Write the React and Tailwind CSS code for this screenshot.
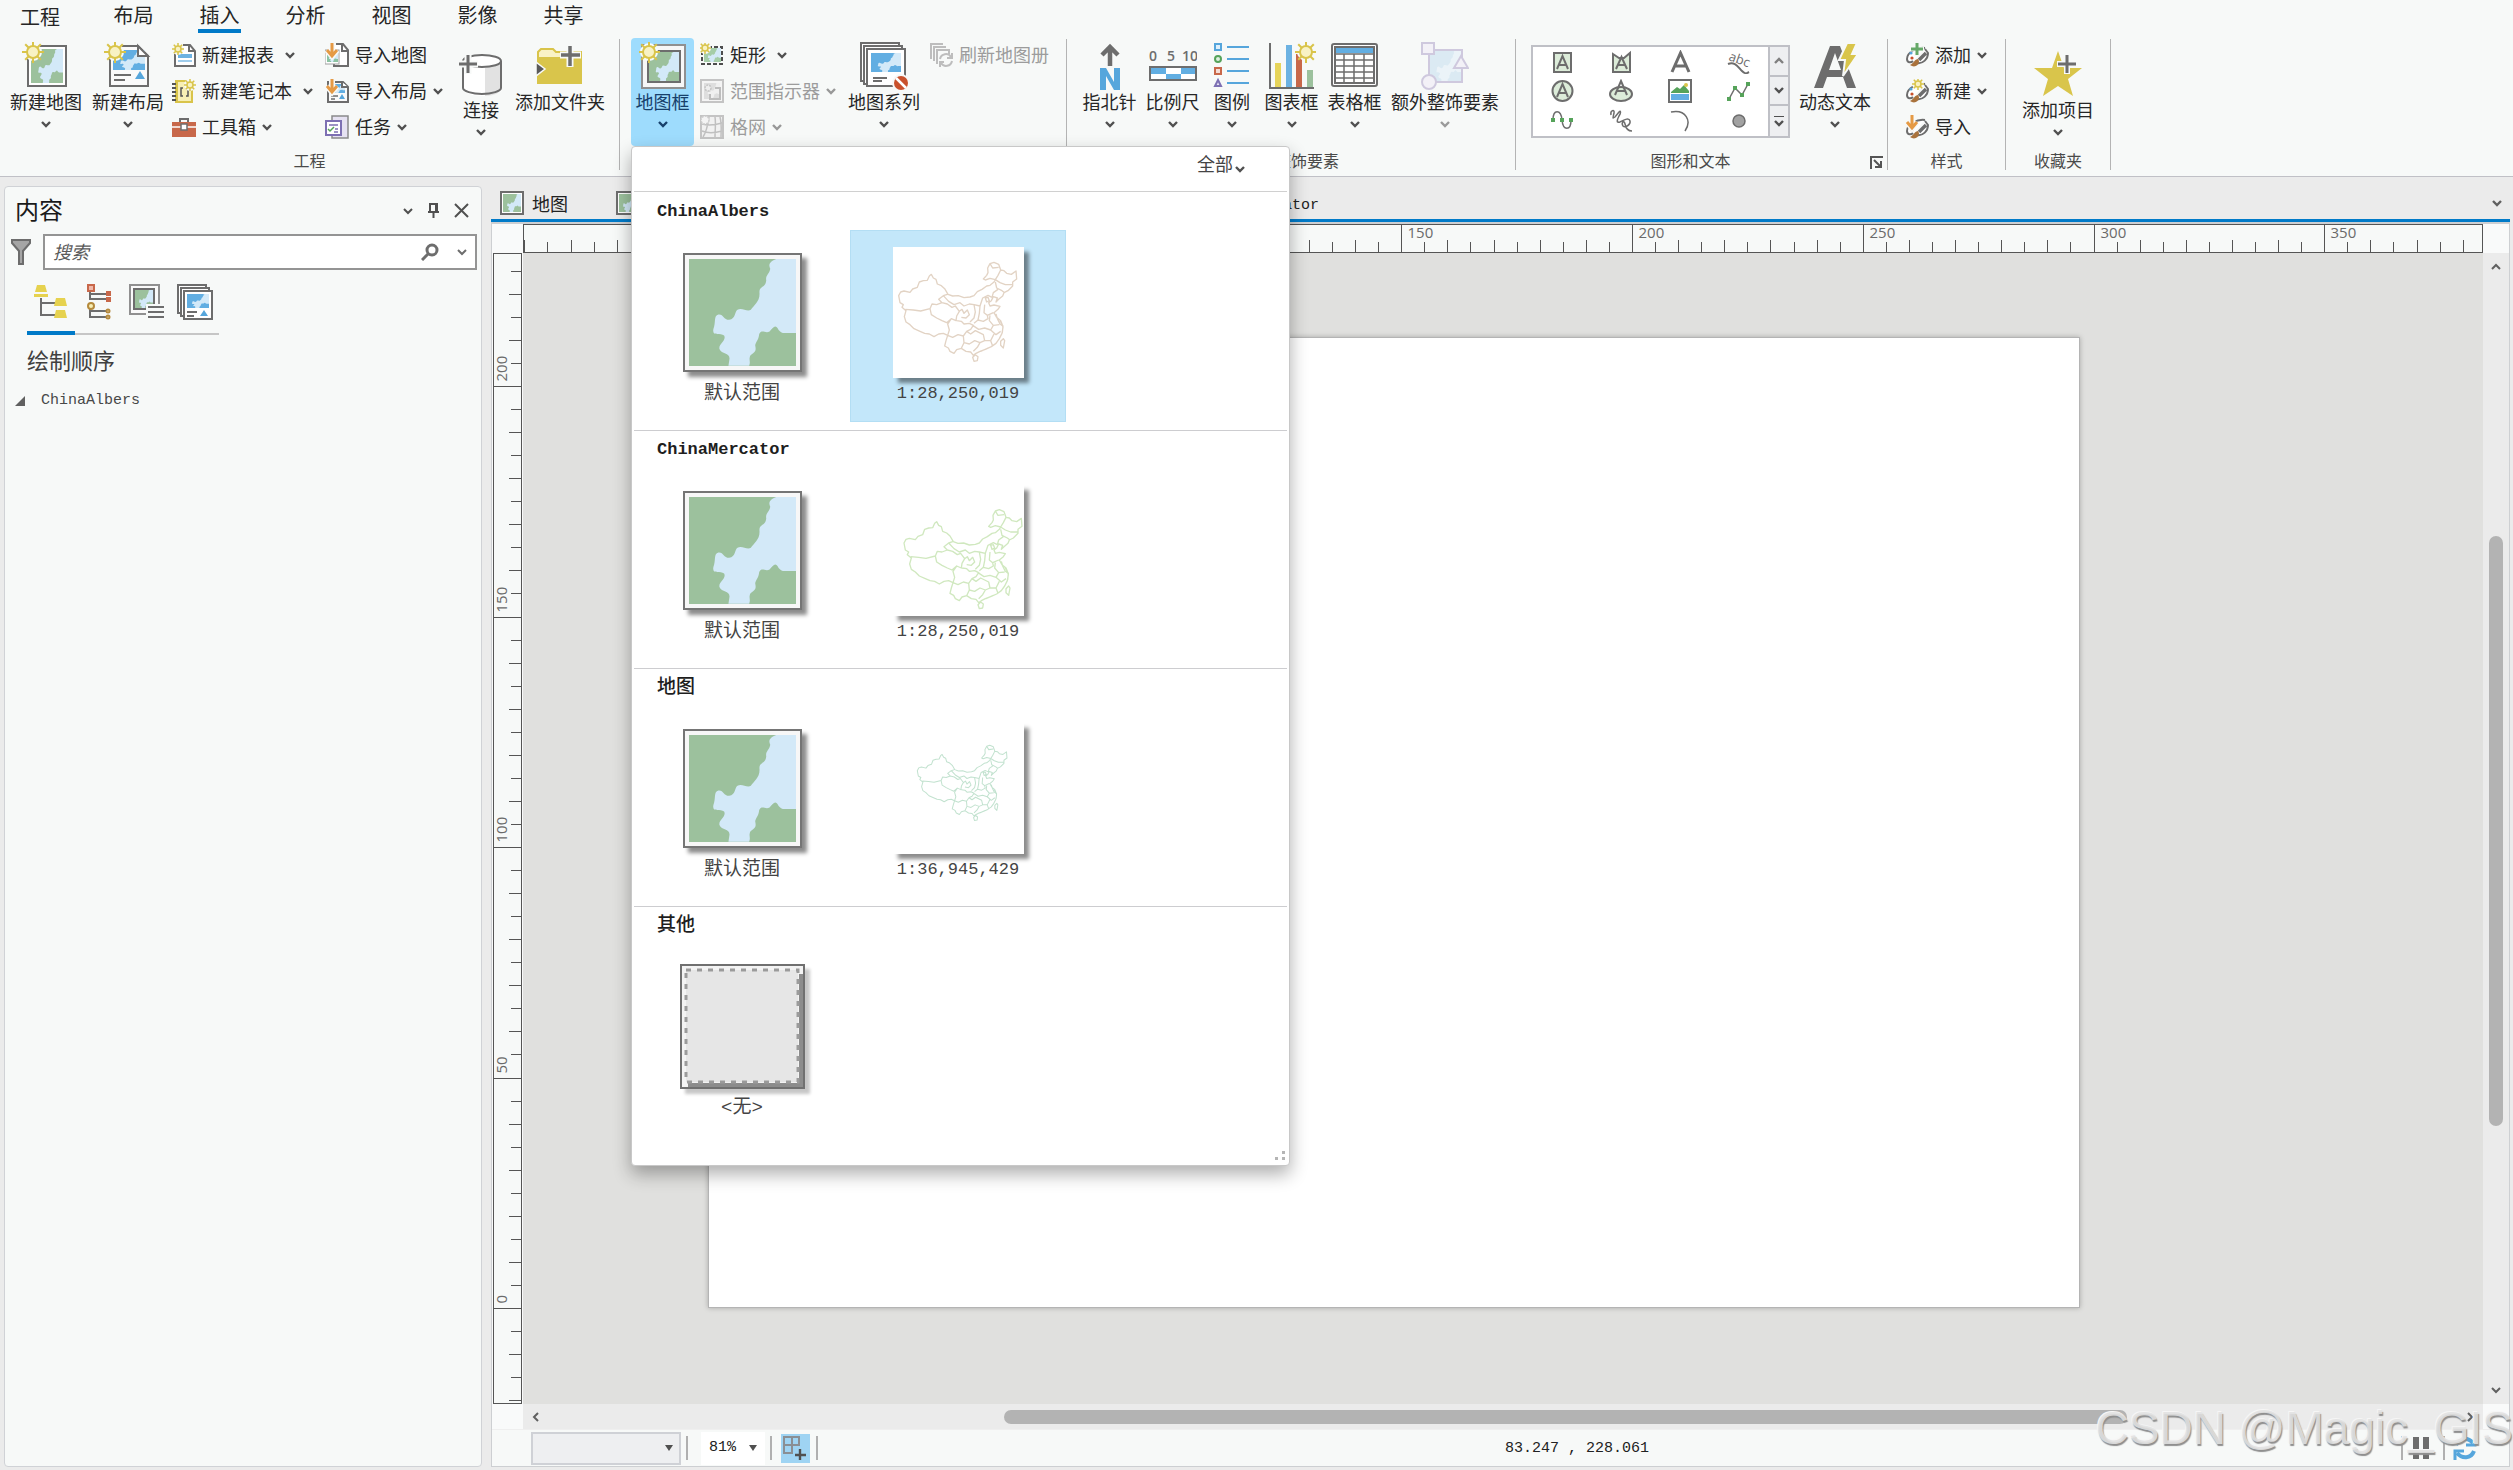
import React from "react";

const WATER =
  "M438,236 C415,245 415,255 420,265 C418,280 405,285 408,300 C405,325 385,315 388,340 C388,365 370,375 362,388 C350,395 335,380 322,388 C312,395 318,415 297,418 C280,418 280,400 265,402 C250,405 258,425 250,445 C245,470 270,455 282,465 C290,480 265,490 268,505 C275,522 300,515 298,535 L295,555 L357,555 C362,540 355,540 360,525 C370,515 380,515 375,495 C375,485 385,480 387,460 C395,445 405,460 418,453 C430,440 435,430 445,448 C455,460 460,457 470,457 L497,457 L497,236 Z";

function Terrain({ x = 0, y = 0, w, h, land = "#9cc19d", water = "#d3e9f8" }) {
  return (
    <svg x={x} y={y} width={w} height={h} viewBox="177 236 320 320" preserveAspectRatio="none">
      <rect x="177" y="236" width="320" height="320" fill={land} />
      <path d={WATER} fill={water} />
    </svg>
  );
}

function Sun({ x, y, r = 6, ray = 11, halo = "#f7f9f8", width = 2 }) {
  const rays = [0, 45, 90, 135, 180, 225, 270, 315];
  return (
    <g transform={`translate(${x} ${y})`}>
      <circle r={r + 3} fill={halo} />
      {rays.map((a) => (
        <line key={a} x1={r} y1="0" x2={ray} y2="0" stroke="#d9c44a" strokeWidth={width} transform={`rotate(${a})`} />
      ))}
      <circle r={r} fill="#f8f2c4" stroke="#d9c44a" strokeWidth={width} />
    </g>
  );
}

function Big({ children }) {
  return (
    <svg width="48" height="48" viewBox="0 0 48 48" fill="none" aria-hidden="true">
      {children}
    </svg>
  );
}

function Small({ children }) {
  return (
    <svg className="shrink-0" width="24" height="24" viewBox="0 0 24 24" fill="none" aria-hidden="true">
      {children}
    </svg>
  );
}

function Chevron({ up = false, thin = false, className = "" }) {
  return (
    <svg className={"shrink-0 " + className} width="10" height="8" viewBox="0 0 10 8" fill="none" stroke="currentColor" strokeWidth={thin ? 2 : 2.4} aria-hidden="true">
      <path d={up ? "M1 6L5 2L9 6" : "M1 2L5 6L9 2"} />
    </svg>
  );
}

const GREY = "#6d6d6d";

const NewMapIcon = () => (
  <Big>
    <rect x="6" y="4" width="38" height="40" fill="#fff" stroke={GREY} strokeWidth="2" />
    <Terrain x={9} y={7} w={32} h={34} />
    <Sun x={11} y={10} />
  </Big>
);

const NewLayoutIcon = () => (
  <Big>
    <path d="M6 4H34L44 14V44H6Z" fill="#fafafa" stroke={GREY} strokeWidth="2" />
    <Terrain x={9} y={8} w={32} h={20} land="#62aee2" />
    <path d="M34 4V14H44Z" fill="#fff" stroke={GREY} strokeWidth="2" />
    <path d="M10 33H27M10 38H21" stroke={GREY} strokeWidth="2" />
    <path d="M36 29L41 37H31Z" fill="#56a6dc" />
    <Sun x={11} y={10} />
  </Big>
);

const ReportIcon = () => (
  <Small>
    <path d="M3 6V23H23V8L18 2H11" fill="#fff" stroke={GREY} strokeWidth="2" />
    <path d="M17 2V8H23" stroke={GREY} strokeWidth="2" />
    <rect x="6" y="11" width="14" height="4" fill="#6cb2e2" />
    <path d="M6 18H20" stroke="#9fcdec" strokeWidth="2" />
    <Sun x={6} y={6} r={3} ray={6} width={1.5} />
  </Small>
);

const NotebookIcon = () => (
  <Small>
    <path d="M4 2H20V23H4Z" fill="#f7efb4" stroke="#d9c44a" strokeWidth="2" />
    <rect x="3" y="2" width="3" height="21" fill="#d9c44a" />
    <path d="M0 5H4M0 9H4M0 13H4M0 17H4M0 21H4" stroke="#555" strokeWidth="2" />
    <path d="M11 9H9V17H11M14 9H16V17H14" stroke="#555" strokeWidth="1.5" />
    <Sun x={18} y={6} r={3} ray={6} width={1.5} />
  </Small>
);

const ToolboxIcon = () => (
  <Small>
    <path d="M8 7V4H16V7" stroke={GREY} strokeWidth="2" />
    <rect x="0" y="7" width="24" height="15" fill="#c8684a" />
    <path d="M0 12H24" stroke="#fff" strokeWidth="1.5" />
    <rect x="9" y="9" width="6" height="6" fill="#fff" stroke={GREY} strokeWidth="1.5" />
  </Small>
);

const DownArrow = () => (
  <g>
    <path d="M7 0V12M2 7L7 13L12 7" stroke="#f7f9f8" strokeWidth="6" />
    <path d="M7 0V12M2 7L7 13L12 7" stroke="#e59a45" strokeWidth="3" />
  </g>
);

const ImportMapIcon = () => (
  <Small>
    <path d="M9 5V23H23V7L18 1H11" fill="#fff" stroke={GREY} strokeWidth="2" />
    <path d="M17 1V8H23" stroke={GREY} strokeWidth="2" />
    <rect x="0" y="7" width="14" height="14" fill="#fff" stroke="#a0a0a0" />
    <Terrain x={2} y={9} w={11} h={10} land="#8cc3a2" />
    <DownArrow />
  </Small>
);

const ImportLayoutIcon = () => (
  <Small>
    <path d="M3 3H18L23 8V23H3Z" fill="#fafafa" stroke={GREY} strokeWidth="2" />
    <Terrain x={5} y={5} w={15} h={9} land="#62aee2" />
    <path d="M17 3V8H23" fill="#fff" stroke={GREY} strokeWidth="2" />
    <path d="M6 17H13M6 20H10" stroke={GREY} strokeWidth="1.5" />
    <path d="M17 15L20 20H14Z" fill="#56a6dc" />
    <DownArrow />
  </Small>
);

const TaskIcon = () => (
  <Small>
    <path d="M7 1H23V23H7Z" fill="#e6e2f2" stroke="#8a8a8a" strokeWidth="1.5" />
    <rect x="1" y="6" width="15" height="14" fill="#fff" stroke="#7d70b3" strokeWidth="2" />
    <path d="M4 10H13M10 14H13M9 17H13" stroke="#7d70b3" strokeWidth="1.5" />
    <path d="M3 14L5 16L9 12" stroke="#56a35a" strokeWidth="1.5" />
  </Small>
);

const DatabaseIcon = () => (
  <Big>
    <path d="M7 11V39C7 43 15 46 25 46S45 43 45 39V11" fill="#fff" />
    <path d="M28 18V46C38 46 44 42 44 39V11Z" fill="#e2e2e2" />
    <ellipse cx="25" cy="11" rx="19" ry="6" fill="#fff" stroke={GREY} strokeWidth="2" />
    <path d="M6 11V38C6 41 15 44 25 44S44 41 44 38V11" stroke={GREY} strokeWidth="2" />
    <path d="M11 3V24M1 14H21" stroke="#f7f9f8" strokeWidth="7" />
    <path d="M11 5V23M2 14H20" stroke={GREY} strokeWidth="3" />
  </Big>
);

const FolderIcon = () => (
  <Big>
    <path d="M2 41V10L5 7H17L20 10H45V41Z" fill="#f9f2c6" stroke="#d9c44a" strokeWidth="2" />
    <path d="M1 15H46V42H1Z" fill="#d9c54b" />
    <path d="M0 20L9 27L0 34Z" fill="#5a5a5a" stroke="#f7f9f8" strokeWidth="1.5" />
    <path d="M34 3V25M24 13H45" stroke="#f7f9f8" strokeWidth="7" />
    <path d="M34 4V24M25 13H44" stroke={GREY} strokeWidth="3.5" />
  </Big>
);

const MapFrameIcon = () => (
  <Big>
    <rect x="3" y="3" width="43" height="43" fill="#f7f7f7" stroke="#909090" strokeWidth="2" />
    <rect x="9" y="9" width="32" height="31" fill="#fff" stroke={GREY} strokeWidth="2" />
    <Terrain x={10} y={10} w={30} h={29} />
    <Sun x={10} y={10} halo="#f4fbff" />
  </Big>
);

const RectIcon = () => (
  <Small>
    <Terrain x={4} y={5} w={17} h={14} land="#a5cda8" />
    <rect x="2" y="4" width="20" height="17" stroke="#4d4d4d" strokeWidth="2" strokeDasharray="4 2" />
    <Sun x={5} y={5} r={3} ray={6} width={1.5} />
  </Small>
);

const ExtentIcon = () => (
  <Small>
    <rect x="1" y="1" width="22" height="22" fill="#f4f4f4" stroke="#c4c4c4" strokeWidth="2" />
    <Terrain x={4} y={4} w={16} h={16} land="#dedede" water="#f0f0f0" />
    <path d="M15 9H20V20H10V15" stroke="#bdbdbd" strokeWidth="2" />
    <circle cx="8" cy="9" r="3" fill="#eee" stroke="#c4c4c4" strokeWidth="1.5" strokeDasharray="2 1" />
  </Small>
);

const GridIcon = () => (
  <Small>
    <rect x="1" y="1" width="22" height="22" fill="#f1f1f1" stroke="#c4c4c4" strokeWidth="2" />
    <path d="M9 2C8 9 7 16 3 22M15 2C16 9 15 16 15 22M20 2C22 9 21 16 21 22M2 9C9 11 15 10 22 8M2 16C9 19 15 18 22 16" stroke="#c0c0c0" strokeWidth="1.5" />
    <circle cx="5" cy="5" r="4" fill="#f4f4f4" stroke="#ccc" strokeWidth="1.5" strokeDasharray="2 1" />
  </Small>
);

const MapSeriesIcon = () => (
  <Big>
    <rect x="1" y="1" width="38" height="38" fill="#fff" stroke={GREY} strokeWidth="2" />
    <rect x="4" y="4" width="38" height="38" fill="#fff" stroke={GREY} strokeWidth="2" />
    <rect x="7" y="7" width="38" height="37" fill="#fff" stroke={GREY} strokeWidth="2" />
    <Terrain x={11} y={11} w={30} h={19} land="#62aee2" />
    <path d="M13 36H27M13 39H22" stroke={GREY} strokeWidth="2" />
    <circle cx="41" cy="41" r="9" fill="#f7f9f8" />
    <circle cx="41" cy="41" r="7" fill="#c9512c" />
    <path d="M36 36L46 46" stroke="#fff" strokeWidth="2.5" />
  </Big>
);

const RefreshBookIcon = () => (
  <Small>
    <path d="M2 16V1H14M5 18V4H17M8 21V7H20V11" stroke="#bdbdbd" strokeWidth="2" />
    <path d="M11 16A6 6 0 0 1 22 14M23 18A6 6 0 0 1 12 20M23 10V15H18M11 24V19H15" stroke="#bdbdbd" strokeWidth="2" />
  </Small>
);

const NorthIcon = () => (
  <Big>
    <path d="M24 4V24M16 13L24 5L32 13" stroke={GREY} strokeWidth="4.5" />
    <path d="M14 48V26H20L28 40V26H34V48H28L20 34V48Z" fill="#56a6dc" />
  </Big>
);

const ScaleIcon = () => (
  <Big>
    <g fill="#6d6d6d" fontFamily="Open Sans" fontSize="14" textAnchor="middle" fontWeight="600">
      <text x="4" y="19">0</text>
      <text x="22" y="19">5</text>
      <text x="41" y="19">10</text>
    </g>
    <rect x="1" y="25" width="46" height="13" fill="#fff" stroke={GREY} strokeWidth="2" />
    <path d="M2 26H17V32H2ZM32 26H46V32H32ZM17 32H32V37H17Z" fill="#62aee2" />
  </Big>
);

const LegendIcon = () => (
  <Big>
    <path d="M19 5H41M19 17H41M19 29H41M19 41H41" stroke="#56a6dc" strokeWidth="2" />
    <rect x="7" y="2" width="6" height="6" fill="#dff0fb" stroke="#56a6dc" strokeWidth="2" />
    <circle cx="10" cy="17" r="3" fill="#dff0df" stroke="#56a35a" strokeWidth="2" />
    <rect x="7" y="26" width="6" height="6" fill="#f5ddd5" stroke="#c8684a" strokeWidth="2" />
    <path d="M10 38L13 44H7Z" fill="#e6e2f2" stroke="#7d70b3" strokeWidth="2" />
  </Big>
);

const ChartIcon = () => (
  <Big>
    <rect x="7" y="21" width="6" height="24" fill="#e6d45a" />
    <rect x="18" y="3" width="6" height="42" fill="#6cb2e2" />
    <rect x="28" y="12" width="6" height="33" fill="#c8684a" />
    <rect x="39" y="28" width="6" height="17" fill="#9cc19d" />
    <path d="M2 1V46H46" stroke={GREY} strokeWidth="2" />
    <Sun x={38} y={10} />
  </Big>
);

const TableIcon = () => (
  <Big>
    <rect x="1" y="2" width="45" height="42" rx="2" fill="#fff" stroke={GREY} strokeWidth="2" />
    <rect x="4" y="5" width="39" height="36" fill="#fff" stroke={GREY} strokeWidth="2" />
    <rect x="5" y="6" width="37" height="5" fill="#62aee2" />
    <path d="M4 12H43M4 18H43M4 24H43M4 30H43M4 36H43M13 12V41M23 12V41M33 12V41" stroke={GREY} strokeWidth="1.5" />
  </Big>
);

const ExtraIcon = () => (
  <Big>
    <Terrain x={8} y={8} w={33} h={32} land="#dbeaf3" water="#ebf3f8" />
    <path d="M8 8H41V40H8Z" stroke="#cfc9de" strokeWidth="2" />
    <rect x="1" y="1" width="12" height="11" fill="#f3f1f7" stroke="#cfc9de" strokeWidth="2" />
    <circle cx="8" cy="40" r="7" fill="#f3f1f7" stroke="#cfc9de" strokeWidth="2" />
    <path d="M40 14L47 26H33Z" fill="#f3f1f7" stroke="#cfc9de" strokeWidth="2" />
  </Big>
);

const DynamicTextIcon = () => (
  <Big>
    <path d="M3 46L19 4H29L45 46H36L32 35H16L12 46ZM18 28H30L24 11Z" fill={GREY} fillRule="evenodd" />
    <path d="M36 1H46L41 12H47L32 34L34 18H28Z" fill="#d9c54b" stroke="#f7f9f8" strokeWidth="2" />
  </Big>
);

function PaletteIcon({ children }) {
  return (
    <Small>
      <path d="M20 5C12 4 2 9 2 16C2 20 6 20 8 18" stroke={GREY} strokeWidth="2" fill="#fff" />
      <path d="M12 20C18 21 23 16 23 10L20 6" stroke={GREY} strokeWidth="2" fill="#fff" />
      <circle cx="7" cy="15" r="1.6" fill="#c8512c" />
      <circle cx="6" cy="10" r="1.6" fill="#56a6dc" />
      <path d="M21 10L14 17" stroke={GREY} strokeWidth="3.5" />
      <path d="M13 16C10 16 9 20 5 22C9 25 14 23 14 18Z" fill="#a9723c" />
      {children}
    </Small>
  );
}

const StarIcon = () => (
  <Big>
    <path d="M24 1L30 18H48L34 29L39 46L24 36L9 46L14 29L0 18H18Z" fill="#d9c54b" />
    <path d="M33 4V24M23 14H43" stroke="#f7f9f8" strokeWidth="6" />
    <path d="M33 5V23M24 14H42" stroke={GREY} strokeWidth="3" />
  </Big>
);

function BigButton({ icon, label, width, low = false, chevron = true, active = false, dim = false }) {
  return (
    <button
      type="button"
      className={
        "mt-px flex h-[108px] flex-col items-center text-[18px] leading-[23px] whitespace-nowrap " +
        width +
        (low ? " pt-3" : " pt-1") +
        (active ? " rounded-[4px] bg-[#9edcfd] text-[#17406b]" : " text-[#262626]")
      }
    >
      {icon}
      <span>{label}</span>
      {chevron && (
        <span className={"flex h-[22px] items-center " + (dim ? "text-[#9a9a9a]" : active ? "text-[#17406b]" : "text-[#505050]")}>
          <Chevron />
        </span>
      )}
    </button>
  );
}

function RowButton({ icon, label, chevron = null, disabled = false }) {
  return (
    <button
      type="button"
      disabled={disabled}
      className={"flex h-9 items-center px-[3px] text-[18px] leading-6 whitespace-nowrap " + (disabled ? "text-[#9c9c9c]" : "text-[#262626]")}
    >
      {icon}
      <span className="ml-1.5 pb-0.5">{label}</span>
      {chevron && <Chevron className={chevron + (disabled ? " text-[#989898]" : " text-[#505050]")} />}
    </button>
  );
}

function Group({ label, className = "", launcher = false, children }) {
  return (
    <section className="flex">
      <div className="flex flex-col">
        <div className={"flex h-[109px] items-start " + className}>{children}</div>
        <div className="flex h-[30px] items-center pb-0.5 text-[16px] text-[#4a4a4a]">
          <span className="flex-1 text-center">{label}</span>
          {launcher && (
            <button type="button" aria-label="更多选项" className="flex w-[22px] justify-center pt-1">
              <svg width="13" height="13" viewBox="0 0 13 13" fill="none" stroke="#555" strokeWidth="2">
                <path d="M1 13V1H13M4 4L11 11M11 5V11H5" />
              </svg>
            </button>
          )}
        </div>
      </div>
      <div className="mt-0.5 h-[131px] w-px bg-[#b4b4b4]" />
    </section>
  );
}

const GALLERY = [
  ["矩形文本", <><rect x="4" y="3" width="17" height="19" fill="#dcecd9" stroke={GREY} strokeWidth="2" /><path d="M7 19L12.5 6L18 19M9 15H16" stroke={GREY} strokeWidth="2" /></>],
  ["面文本", <><path d="M4 22V4L10 8H15L21 3V22Z" fill="#dcecd9" stroke={GREY} strokeWidth="2" /><path d="M7 19L12.5 7L18 19M9 15H16" stroke={GREY} strokeWidth="2" /></>],
  ["直线文本", <path d="M4 22L12.5 3L21 22M7 16H18" stroke={GREY} strokeWidth="3" />],
  ["曲线文本", <><text x="1" y="10" fontSize="13" fontFamily="Open Sans" fill={GREY} transform="rotate(20 1 10)">abc</text><path d="M1 14C8 11 11 17 15 21S20 23 22 22" stroke={GREY} strokeWidth="2" /></>],
  ["圆形文本", <><circle cx="12.5" cy="12" r="10" fill="#dcecd9" stroke={GREY} strokeWidth="2" /><path d="M7 18L12.5 5L18 18M9 14H16" stroke={GREY} strokeWidth="2" /></>],
  ["椭圆文本", <><ellipse cx="12" cy="15" rx="11" ry="7" fill="#dcecd9" stroke={GREY} strokeWidth="2" /><path d="M6 16L12 2L18 16M8 12H16" stroke={GREY} strokeWidth="2" /></>],
  ["图片", <><rect x="1" y="1" width="22" height="22" fill="#fff" stroke={GREY} strokeWidth="2" /><path d="M3 13L9 8L12 10L16 6L21 12V14H3Z" fill="#56a35a" /><circle cx="18" cy="6" r="2" fill="#d9c44a" /><path d="M3 15H21V21H3Z" fill="#62aee2" /></>],
  ["折线", <><path d="M2 20L8 9L15 16L21 5" stroke={GREY} strokeWidth="1.5" /><path d="M0 18H4V22H0ZM6 7H10V11H6ZM13 14H17V18H13ZM19 3H23V7H19Z" fill="#56a35a" /></>],
  ["曲线", <><path d="M3 11C3 0 11 0 12 11S21 22 21 11" stroke={GREY} strokeWidth="1.5" /><path d="M1 9H5V13H1ZM10 9H14V13H10ZM19 9H23V13H19Z" fill="#56a35a" /></>],
  ["手绘线", <path d="M2 6C1 1 6 0 5 4C4 9 3 10 6 8L10 3C12 1 12 4 10 7C8 11 7 14 11 13C15 11 20 8 21 12C22 16 16 19 14 17C12 14 15 10 16 15C17 20 19 22 23 22" stroke={GREY} strokeWidth="1.5" />],
  ["弧", <path d="M3 3C18 0 24 12 17 22" stroke={GREY} strokeWidth="1.5" />],
  ["椭圆", <circle cx="12" cy="12" r="6" fill="#a2a2a2" stroke={GREY} strokeWidth="1.5" />],
];

const CHINA =
  "M806,345 L812,334 L822,331 L840,335 L848,325 L862,320 L868,304 L880,300 L892,299 L898,286 L904,281 L910,292 L918,296 L922,310 L934,315 L944,324 L954,341 L968,346 L985,345 L1002,351 L1020,349 L1032,345 L1042,333 L1056,326 L1070,316 L1080,314 L1092,304 L1096,297 L1080,293 L1066,298 L1060,295 L1070,284 L1074,276 L1073,262 L1080,249 L1092,245 L1106,251 L1112,268 L1122,270 L1130,278 L1144,281 L1158,271 L1160,295 L1148,304 L1148,316 L1134,330 L1122,336 L1118,346 L1106,356 L1098,364 L1102,352 L1090,348 L1084,360 L1076,366 L1080,376 L1092,373 L1110,377 L1104,386 L1092,396 L1100,410 L1112,420 L1116,430 L1119,440 L1116,458 L1108,474 L1098,488 L1084,498 L1066,506 L1050,512 L1038,518 L1030,524 L1022,514 L1008,512 L994,503 L980,507 L972,518 L960,512 L955,502 L944,496 L948,480 L953,464 L940,458 L926,460 L912,468 L898,460 L884,458 L870,452 L852,444 L840,432 L828,424 L823,408 L828,390 L816,380 L820,372 L810,366 Z M826,386 L850,388 L872,391 L900,384 M900,384 L906,370 L920,372 L936,366 L926,356 L940,345 L952,341 M936,366 L952,370 L966,380 L976,376 L988,392 L980,406 L978,420 L964,414 L950,426 L936,420 L920,412 L904,402 L900,384 M940,345 L956,362 L972,372 L990,366 L1002,376 L1018,370 L1032,372 L1050,376 L1058,352 L1074,344 L1086,350 M988,392 L996,386 L1002,398 L1012,388 L1018,402 L1008,412 L994,410 M964,414 L953,430 L958,448 L953,464 L968,470 L984,462 L1000,466 L1010,452 L1022,446 L1030,434 L1018,428 L1002,430 L994,422 L980,420 M1032,372 L1036,394 L1032,412 L1020,424 M1050,376 L1048,398 L1044,418 L1032,428 M1064,372 L1062,396 L1072,404 L1090,396 M1044,418 L1060,422 L1074,414 L1072,404 M1028,434 L1046,446 L1064,442 L1082,448 L1090,434 L1078,420 L1080,404 M1090,434 L1108,432 M1082,448 L1098,462 L1112,452 M1000,466 L1002,486 L1018,490 L1034,480 L1050,486 L1064,480 L1060,462 L1036,450 L1022,460 L1010,452 M1064,480 L1082,480 L1092,460 M1082,480 L1088,496 M1050,486 L1042,500 L1030,512 M1002,486 L994,503 M1112,268 L1104,284 L1096,297 L1110,306 L1126,312 L1148,312 M1096,304 L1100,322 L1116,330 L1124,336 M1086,350 L1090,336 L1104,326 M1080,249 L1088,262 L1106,260 M1066,352 L1074,350 L1078,360 L1070,364 Z M1098,400 L1102,414 L1110,430 L1118,436 M1028,530 L1036,522 L1044,528 L1042,540 L1032,542 Z M1112,482 L1120,474 L1124,480 L1120,502 L1112,494 Z M1110,420 L1119,436 L1117,456 M1052,512 L1074,502";

function ChinaThumb({ stroke, transform }) {
  return (
    <svg className="bg-white shadow-[5px_5px_4px_rgba(0,0,0,0.45)]" width="131" height="131" viewBox="0 0 393 393" aria-hidden="true">
      <g transform={transform}>
        <path d={CHINA} transform="translate(-789 -199)" fill="none" stroke={stroke} strokeWidth="4" strokeLinejoin="round" />
      </g>
    </svg>
  );
}

function DefaultThumb() {
  return (
    <svg className="shadow-[5px_5px_4px_rgba(0,0,0,0.45)]" width="119" height="119" viewBox="0 0 119 119" aria-hidden="true">
      <rect x="1" y="1" width="117" height="117" fill="#f7f7f7" stroke="#757575" strokeWidth="2" />
      <Terrain x={6} y={6} w={107} h={107} />
    </svg>
  );
}

function NoneThumb() {
  return (
    <svg className="shadow-[5px_5px_3px_rgba(0,0,0,0.22)]" width="125" height="125" viewBox="0 0 125 125" aria-hidden="true">
      <rect x="1" y="1" width="123" height="123" fill="#f3f3f3" stroke="#707070" strokeWidth="2" />
      <path d="M121 10V121H8" fill="none" stroke="#8c8c8c" strokeWidth="4" />
      <rect x="6" y="6" width="112" height="112" fill="#e6e6e6" stroke="#9b9b9b" strokeWidth="3" strokeDasharray="5 6" />
    </svg>
  );
}

function FrameOption({ thumb, label, latin = false, selected = false }) {
  return (
    <button
      type="button"
      className={
        "flex h-48 w-[216px] flex-col items-center border pt-4 leading-8 text-[#444] " +
        (latin ? "text-[17px] " : "text-[19px] ") +
        (selected ? "border-[#b3def4] bg-[#c3e7fa]" : "border-transparent")
      }
    >
      <span className="flex h-[131px] items-center">{thumb}</span>
      <span>{label}</span>
    </button>
  );
}

function FrameSection({ title, latin = false, last = false, children }) {
  return (
    <section className={"pb-2 " + (last ? "" : "border-b border-[#cdcdd0]")}>
      <h3 className={"h-[37px] pl-[23px] leading-[38px] text-[#1e1e1e] " + (latin ? "text-[17px] font-bold" : "text-[19px] font-medium")}>{title}</h3>
      <div className="flex">{children}</div>
    </section>
  );
}

function FramePopup() {
  return (
    <div className="absolute top-[109px] left-0 z-20 h-[1020px] w-[659px] rounded-[4px] border border-[#c8c8c8] bg-white px-0.5 font-[Liberation_Mono,Noto_Sans_CJK_SC,monospace] shadow-[0_8px_18px_rgba(0,0,0,0.32)]">
      <div className="mb-px flex h-[45px] items-center justify-end border-b border-[#d0d0d0] pr-[42px] pb-1.5">
        <button type="button" className="flex items-center gap-0.5 text-[18px] text-[#444]">
          全部
          <Chevron className="mt-1.5 text-[#505050]" />
        </button>
      </div>
      <FrameSection latin title="ChinaAlbers">
        <FrameOption thumb={<DefaultThumb />} label="默认范围" />
        <FrameOption selected latin thumb={<ChinaThumb stroke="#e2d3c4" />} label="1:28,250,019" />
      </FrameSection>
      <FrameSection latin title="ChinaMercator">
        <FrameOption thumb={<DefaultThumb />} label="默认范围" />
        <FrameOption latin thumb={<ChinaThumb stroke="#d0e8bf" transform="translate(16 28)" />} label="1:28,250,019" />
      </FrameSection>
      <FrameSection title="地图">
        <FrameOption thumb={<DefaultThumb />} label="默认范围" />
        <FrameOption latin thumb={<ChinaThumb stroke="#c2e2cf" transform="translate(60 32) scale(0.76)" />} label="1:36,945,429" />
      </FrameSection>
      <FrameSection title="其他" last>
        <FrameOption thumb={<NoneThumb />} label="<无>" />
      </FrameSection>
      <svg className="absolute right-1 bottom-1" width="10" height="10" viewBox="0 0 10 10" fill="#b5b5b5" aria-hidden="true">
        <path d="M7 0H10V3H7ZM7 6H10V9H7ZM0 6H3V9H0Z" />
      </svg>
    </div>
  );
}

function Ribbon() {
  const tabs = ["布局", "插入", "分析", "视图", "影像", "共享"];
  return (
    <header className="border-b border-[#c0c0c6] bg-[#f7f9f8]">
      <nav className="flex h-[37px] pl-[18px] text-[20px] leading-[28px] text-[#262626]">
        <button type="button" className="mr-[50px] h-[33px] w-11">工程</button>
        {tabs.map((t) => (
          <button key={t} type="button" className={"mr-[43px] h-[33px] w-[43px] border-b-4 " + (t === "插入" ? "border-[#007ac8]" : "border-transparent")}>
            {t}
          </button>
        ))}
      </nav>
      <div className="flex">
        <Group label="工程" className="pr-[11px] pl-[5px]">
          <BigButton icon={<NewMapIcon />} label="新建地图" width="w-[82px]" />
          <BigButton icon={<NewLayoutIcon />} label="新建布局" width="w-[82px]" />
          <div className="flex w-[153px] flex-col items-start">
            <RowButton icon={<ReportIcon />} label="新建报表" chevron="ml-[11px]" />
            <RowButton icon={<NotebookIcon />} label="新建笔记本" chevron="ml-[11px]" />
            <RowButton icon={<ToolboxIcon />} label="工具箱" chevron="ml-1.5" />
          </div>
          <div className="flex w-32 flex-col items-start">
            <RowButton icon={<ImportMapIcon />} label="导入地图" />
            <RowButton icon={<ImportLayoutIcon />} label="导入布局" chevron="ml-1.5" />
            <RowButton icon={<TaskIcon />} label="任务" chevron="ml-1.5" />
          </div>
          <BigButton icon={<DatabaseIcon />} label="连接" width="w-[62px]" low />
          <BigButton icon={<FolderIcon />} label="添加文件夹" width="w-24" chevron={false} />
        </Group>
        <Group label="地图框" className="pr-[14px] pl-[11px]">
          <div className="relative">
            <BigButton icon={<MapFrameIcon />} label="地图框" width="w-[63px]" active />
            <FramePopup />
          </div>
          <div className="ml-[3px] flex w-[145px] flex-col items-start">
            <RowButton icon={<RectIcon />} label="矩形" chevron="ml-[11px]" />
            <RowButton icon={<ExtentIcon />} label="范围指示器" chevron="ml-1.5" disabled />
            <RowButton icon={<GridIcon />} label="格网" chevron="ml-1.5" disabled />
          </div>
          <BigButton icon={<MapSeriesIcon />} label="地图系列" width="w-[84px]" />
          <RowButton icon={<RefreshBookIcon />} label="刷新地图册" disabled />
        </Group>
        <Group label="地图整饰要素" className="px-[11px]">
          <BigButton icon={<NorthIcon />} label="指北针" width="w-[63px]" />
          <BigButton icon={<ScaleIcon />} label="比例尺" width="w-[63px]" />
          <BigButton icon={<LegendIcon />} label="图例" width="w-14" />
          <BigButton icon={<ChartIcon />} label="图表框" width="w-[63px]" />
          <BigButton icon={<TableIcon />} label="表格框" width="w-[63px]" />
          <BigButton icon={<ExtraIcon />} label="额外整饰要素" width="w-[118px]" dim />
        </Group>
        <Group label="图形和文本" className="pr-[11px] pl-[15px]" launcher>
          <div className="mt-2 flex h-[93px] w-[259px] border-2 border-[#bfc0c6] bg-white">
            <div className="grid flex-1 grid-cols-4 grid-rows-3">
              {GALLERY.map(([name, art]) => (
                <button key={name} type="button" aria-label={name} className="flex items-center justify-center">
                  <Small>{art}</Small>
                </button>
              ))}
            </div>
            <div className="grid w-5 grid-rows-3 divide-y-2 divide-[#bfc0c6] border-l-2 border-[#bfc0c6] bg-[#eeeff1] text-[#505050]">
              <button type="button" aria-label="上一行" className="flex items-center justify-center text-[#808080]"><Chevron up /></button>
              <button type="button" aria-label="下一行" className="flex items-center justify-center"><Chevron /></button>
              <button type="button" aria-label="展开" className="flex flex-col items-center justify-center gap-0.5">
                <span className="h-px w-2.5 bg-[#505050]" />
                <Chevron />
              </button>
            </div>
          </div>
          <BigButton icon={<DynamicTextIcon />} label="动态文本" width="ml-[4px] w-[82px]" />
        </Group>
        <Group label="样式" className="w-[117px] pl-[14px]">
          <div className="flex flex-col items-start">
            <RowButton icon={<PaletteIcon><path d="M12 0V13M5 6H19" stroke="#f7f9f8" strokeWidth="5" /><path d="M12 0V12M6 6H18" stroke="#66a968" strokeWidth="3" /></PaletteIcon>} label="添加" chevron="ml-1.5" />
            <RowButton icon={<PaletteIcon><Sun x={13} y={5} r={3} ray={6} width={1.5} /></PaletteIcon>} label="新建" chevron="ml-1.5" />
            <RowButton icon={<PaletteIcon><DownArrow /></PaletteIcon>} label="导入" />
          </div>
        </Group>
        <Group label="收藏夹" className="px-[11px]">
          <BigButton icon={<StarIcon />} label="添加项目" width="w-[82px]" low />
        </Group>
      </div>
    </header>
  );
}

function Sidebar() {
  return (
    <aside className="flex w-[478px] shrink-0 flex-col rounded-[4px] border border-[#d0d2d6] bg-[#f7f9f8]">
      <div className="flex h-[47px] items-center pr-3 pb-1 pl-2.5">
        <h2 className="flex-1 text-[24px] leading-9 text-[#1a1a1a]">内容</h2>
        <div className="flex items-center gap-[15px] pt-1 text-[#505050]">
          <button type="button" aria-label="选项"><Chevron thin /></button>
          <button type="button" aria-label="固定">
            <svg width="11" height="15" viewBox="0 0 11 15" fill="none" stroke="currentColor" strokeWidth="2">
              <path d="M2 9V1H9V9M0 9H11M5.5 9V15M8 1V9" />
            </svg>
          </button>
          <button type="button" aria-label="关闭">
            <svg width="15" height="15" viewBox="0 0 15 15" fill="none" stroke="currentColor" strokeWidth="2">
              <path d="M1 1L14 14M14 1L1 14" />
            </svg>
          </button>
        </div>
      </div>
      <div className="flex items-center gap-3 pr-1 pl-1.5">
        <svg width="20" height="26" viewBox="0 0 20 26" fill="#a5a5a5" stroke="#6d6d6d" strokeWidth="2" aria-hidden="true">
          <path d="M1 1H19V4L12 12V25H8V12L1 4Z" />
        </svg>
        <div className="flex h-9 flex-1 items-center border-2 border-[#949494] bg-white pr-2 pl-2">
          <input type="text" aria-label="搜索" placeholder="搜索" className="w-full min-w-0 flex-1 pb-0.5 text-[18px] leading-6 outline-none placeholder:text-[#5a5a5a] placeholder:italic" />
          <button type="button" aria-label="查找" className="mr-[18px]">
            <svg width="18" height="18" viewBox="0 0 18 18" fill="none" stroke="#6d6d6d" strokeWidth="3">
              <circle cx="11" cy="7" r="5" />
              <path d="M7 11L1 17" />
            </svg>
          </button>
          <button type="button" aria-label="搜索选项" className="text-[#6d6d6d]"><Chevron thin /></button>
        </div>
      </div>
      <div className="mt-2 ml-[22px] flex self-start">
        <button type="button" aria-label="按绘制顺序列出" className="flex h-[57px] w-12 items-start justify-center border-b-4 border-[#007ac8] pt-1.5">
          <svg width="34" height="36" viewBox="0 0 34 36" fill="#e6d24f">
            <path d="M7 14V31H22M7 19H22" fill="none" stroke="#6d6d6d" strokeWidth="2" />
            <path d="M3 1H11L13 8H1ZM0 10H14V13H0ZM22 14H31L33 22H20ZM22 26H31L33 34H20Z" />
          </svg>
        </button>
        <div className="flex border-b-2 border-[#c6c6c6]">
          <button type="button" aria-label="按元素类型列出" className="flex w-12 items-start justify-center pt-1.5">
            <svg width="24" height="36" viewBox="0 0 24 36" fill="none" stroke="#6d6d6d" strokeWidth="2">
              <path d="M3 7V15H20M3 10H20M3 24V33H20M3 27H20" />
              <path d="M1 1H7V7H1Z" fill="#f0b9aa" stroke="#c8684a" />
              <path d="M20 8H23V11H20ZM20 14H23V17H20Z" stroke="#c8684a" fill="#c8684a" />
              <circle cx="4" cy="22" r="3" fill="#f7efb4" stroke="#b58a3c" />
              <circle cx="21" cy="27" r="1.5" stroke="#b58a3c" />
              <circle cx="21" cy="33" r="1.5" stroke="#b58a3c" />
            </svg>
          </button>
          <button type="button" aria-label="列出地图框" className="flex w-12 items-start justify-center pt-1.5">
            <svg width="36" height="36" viewBox="0 0 36 36" fill="none">
              <rect x="1" y="1" width="29" height="29" fill="#fafafa" stroke="#909090" strokeWidth="2" />
              <rect x="5" y="5" width="20" height="20" stroke="#6d6d6d" strokeWidth="2" />
              <Terrain x={6} y={6} w={18} h={18} />
              <path d="M17 20H36V36H17Z" fill="#f7f9f8" />
              <path d="M19 23H35M19 28H35M19 33H35" stroke="#6d6d6d" strokeWidth="2" />
            </svg>
          </button>
          <button type="button" aria-label="列出地图系列" className="flex w-12 items-start justify-center pt-1.5">
            <svg width="36" height="36" viewBox="0 0 36 36" fill="#fff">
              <g stroke="#6d6d6d" strokeWidth="2">
                <rect x="1" y="1" width="28" height="28" />
                <rect x="4" y="4" width="28" height="28" />
                <rect x="7" y="7" width="28" height="28" />
              </g>
              <Terrain x={10} y={10} w={22} h={14} land="#62aee2" />
              <path d="M10 28H20M10 32H17" stroke="#6d6d6d" strokeWidth="2" />
              <path d="M27 26L31 32H23Z" fill="#56a6dc" />
            </svg>
          </button>
        </div>
      </div>
      <h3 className="mt-1.5 pl-[22px] text-[22px] leading-9 text-[#404040]">绘制顺序</h3>
      <div className="mt-2.5 flex items-center gap-4 pl-2.5 font-[Liberation_Mono,Noto_Sans_CJK_SC,monospace] text-[15px] leading-7 text-[#484848]">
        <svg width="10" height="10" viewBox="0 0 10 10" fill="#606060" aria-hidden="true"><path d="M10 0V10H0Z" /></svg>
        ChinaAlbers
      </div>
    </aside>
  );
}

const UNIT = 4.615;

function HorizontalRuler() {
  const ticks = [];
  for (let u = -40; u <= 380; u += 5) ticks.push(u);
  return (
    <svg className="block h-[29px] w-full overflow-visible border border-[#555] bg-[#f7f9f8]" fill="#6a6a6a" fontFamily="Open Sans" fontSize="15" aria-hidden="true">
      {ticks.map((u) => {
        const x = Math.round(185 + u * UNIT) + 0.5;
        return (
          <g key={u}>
            <line x1={x} x2={x} y1={u % 50 === 0 ? 0 : u % 10 === 0 ? 15 : 17} y2="28" stroke="#555" />
            {u % 50 === 0 && <text x={x + 6} y="13">{u}</text>}
          </g>
        );
      })}
    </svg>
  );
}

function VerticalRuler() {
  const ticks = [];
  for (let u = -20; u <= 225; u += 5) ticks.push(u);
  return (
    <svg className="ml-px block h-full w-[29px] overflow-visible border border-[#555] bg-[#f7f9f8]" fill="#6a6a6a" fontFamily="Open Sans" fontSize="15" aria-hidden="true">
      {ticks.map((u) => {
        const y = Math.round(1054 - u * 4.61) + 0.5;
        return (
          <g key={u}>
            <line y1={y} y2={y} x1={u % 50 === 0 ? 0 : u % 10 === 0 ? 15 : 17} x2="28" stroke="#555" />
            {u % 50 === 0 && <text transform={`translate(13 ${y - 5}) rotate(-90)`}>{u}</text>}
          </g>
        );
      })}
    </svg>
  );
}

function DocIcon() {
  return (
    <svg width="24" height="24" viewBox="0 0 24 24" aria-hidden="true">
      <rect x="1" y="1" width="22" height="22" fill="#fff" stroke="#6d6d6d" strokeWidth="2" />
      <Terrain x={3} y={3} w={18} h={18} />
    </svg>
  );
}

function Divider() {
  return <span className="h-6 w-0.5 bg-[#b0b0b0]" />;
}

function StatusBar() {
  return (
    <footer className="col-span-3 flex h-[37px] items-center border-t border-[#efefef] bg-[#f7f9f8] pr-8 pl-[39px] font-[Liberation_Mono,Noto_Sans_CJK_SC,monospace] text-[15px] text-[#222]">
      <div className="relative flex items-center">
        <select aria-label="图层" className="h-[33px] w-[150px] appearance-none border-2 border-[#cfd1d6] bg-[#eeeff1]">
          <option></option>
        </select>
        <svg className="pointer-events-none absolute right-2" width="8" height="6" viewBox="0 0 8 6" fill="#505050"><path d="M0 0H8L4 6Z" /></svg>
      </div>
      <div className="ml-[5px] flex items-center">
        <Divider />
        <div className="relative ml-[13px] flex items-center">
          <select aria-label="缩放" className="h-[33px] w-16 appearance-none bg-white pl-2">
            <option>81%</option>
          </select>
          <svg className="pointer-events-none absolute right-2" width="8" height="6" viewBox="0 0 8 6" fill="#505050"><path d="M0 0H8L4 6Z" /></svg>
        </div>
        <span className="w-[5px]" />
        <Divider />
        <button type="button" aria-label="捕捉" className="mr-1.5 ml-[9px] flex h-[29px] w-[29px] items-center justify-center bg-[#9fd4f3]">
          <svg width="25" height="25" viewBox="0 0 25 25" fill="none" stroke="#8a8f94" strokeWidth="2">
            <path d="M1 1H16V9H1ZM1 9V17H9V1" />
            <path d="M17 13V24M12 19H23" stroke="#505050" strokeWidth="2.4" />
          </svg>
        </button>
        <Divider />
      </div>
      <span className="ml-auto pt-0.5 pr-[752px] whitespace-pre">83.247 , 228.061</span>
      <div className="flex items-center">
        <Divider />
        <button type="button" aria-label="暂停" className="mr-3 ml-2">
          <svg width="20" height="22" viewBox="0 0 20 22" fill="#6d6d6d"><path d="M2 0H8V22H2ZM12 0H18V22H12Z" /></svg>
        </button>
        <Divider />
        <button type="button" aria-label="刷新" className="ml-2">
          <svg width="24" height="24" viewBox="0 0 24 24" fill="none" stroke="#56a6dc" strokeWidth="4">
            <path d="M3 9C6 1 15 1 20 7M21 15C18 23 9 23 4 17" />
            <path d="M22 0V9H13M2 24V15H11" strokeWidth="3" />
          </svg>
        </button>
      </div>
    </footer>
  );
}

function LayoutView() {
  return (
    <main className="flex min-w-0 flex-1 flex-col">
      <div className="flex h-[33px] items-center pt-1 pr-2 pb-1 pl-[9px] text-[18px] leading-6 text-[#222]">
        <button type="button" className="flex w-[116px] items-center gap-2"><DocIcon />地图</button>
        <button type="button" aria-label="布局视图" className="flex w-[554px] items-center"><DocIcon /></button>
        <button type="button" className="flex items-center gap-2 pt-1.5 font-[Liberation_Mono,monospace] text-[15px]"><DocIcon />ChinaMercator</button>
        <button type="button" aria-label="视图列表" className="ml-auto text-[#606060]"><Chevron /></button>
      </div>
      <div className="h-[3px] bg-[#007ac8]" />
      <div className="grid flex-1 grid-cols-[31px_minmax(0,1fr)_26px] grid-rows-[29px_minmax(0,1fr)_25px_37px] border-x border-t-2 border-b border-[#cdcfd2] bg-[#f9fafa]">
        <div />
        <HorizontalRuler />
        <div />
        <VerticalRuler />
        <div className="overflow-hidden bg-[#e0e0de]">
          <div className="mt-[84px] ml-[185px] h-[971px] w-[1372px] border border-[#b4b4b4] bg-white shadow-[0_0_5px_rgba(0,0,0,0.25)]" />
        </div>
        <div className="flex flex-col items-center bg-[#ebebeb] py-2.5 text-[#606060]">
          <Chevron up thin />
          <div className="mt-[265px] h-[590px] w-3.5 rounded-full bg-[#b3b3b3]" />
          <Chevron thin className="mt-auto" />
        </div>
        <div />
        <div className="flex items-center bg-[#ebebeb] px-2 text-[#606060]">
          <Chevron thin className="rotate-90" />
          <div className="ml-[463px] h-3.5 w-[1123px] rounded-full bg-[#b3b3b3]" />
          <Chevron thin className="ml-auto -rotate-90" />
        </div>
        <div />
        <StatusBar />
      </div>
    </main>
  );
}

export default function App() {
  return (
    <div className="relative flex min-h-screen flex-col overflow-hidden bg-[#ebebeb] font-[Noto_Sans_CJK_SC,sans-serif]">
      <Ribbon />
      <div className="flex flex-1 gap-[9px] pt-[9px] pr-[3px] pb-[3px] pl-1">
        <Sidebar />
        <LayoutView />
      </div>
      <div className="pointer-events-none absolute right-0 bottom-4 font-[Liberation_Sans,sans-serif] text-[46px] leading-[52px] text-[#e2e2e2]/90 [text-shadow:1px_2px_1px_#8f8f8f,-1px_-1px_0_#f6f6f6]">
        CSDN @Magic_GIS
      </div>
    </div>
  );
}
